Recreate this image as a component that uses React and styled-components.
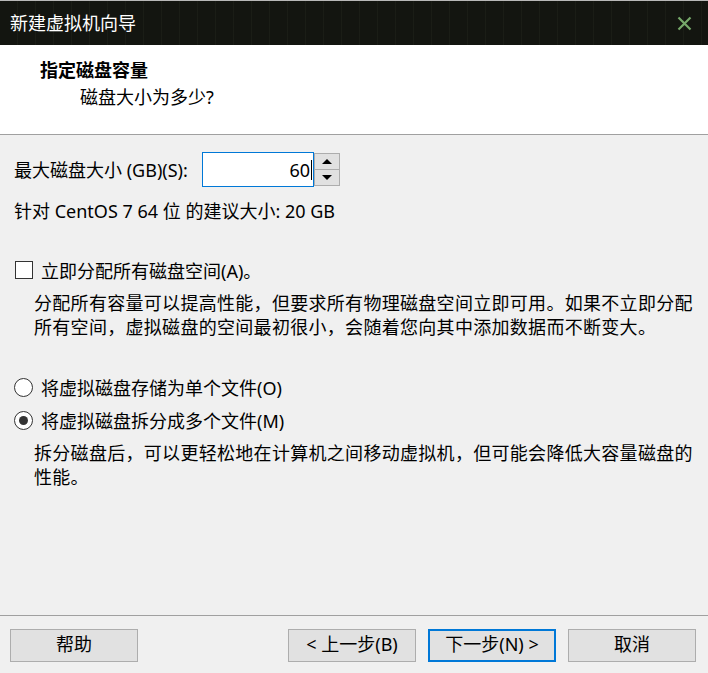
import React, { useState } from "react";
import styled, { createGlobalStyle } from "styled-components";

const GlobalStyle = createGlobalStyle`
  html, body {
    margin: 0;
    padding: 0;
    background: #f0f0f0;
  }
  body {
    font-family: "Noto Sans", "Noto Sans CJK SC", "Liberation Sans", sans-serif;
    font-size: 18px;
    color: #000;
  }
`;

const Window = styled.div`
  width: 708px;
  height: 673px;
  display: flex;
  flex-direction: column;
  background: #f0f0f0;
  overflow: hidden;
`;

const TitleBar = styled.div`
  height: 44px;
  border-top: 1px solid #b8b8b8;
  display: flex;
  align-items: center;
  justify-content: space-between;
  padding: 0 16px 0 10px;
  background-color: #131510;
  background-image: repeating-linear-gradient(
    90deg,
    rgba(255, 255, 255, 0) 0px,
    rgba(255, 255, 255, 0) 17px,
    rgba(120, 130, 100, 0.07) 17px,
    rgba(120, 130, 100, 0.07) 18px
  );
  color: #fff;
`;

const TitleText = styled.span`
  font-size: 18px;
  line-height: 24px;
`;

const CloseIcon = styled.svg`
  width: 15px;
  height: 15px;
  display: block;
`;

const Header = styled.div`
  height: 90px;
  background: #fff;
  border-bottom: 1px solid #a0a0a0;
  display: flex;
  flex-direction: column;
  padding-top: 13px;
  box-sizing: border-box;
`;

const HeaderTitle = styled.div`
  padding-left: 40px;
  font-weight: 700;
  line-height: 24px;
  font-size: 18px;
`;

const HeaderSub = styled.div`
  padding-left: 80px;
  margin-top: 3px;
  line-height: 24px;
`;

const Body = styled.div`
  flex: 1;
  display: flex;
  flex-direction: column;
  padding: 17px 0 0 14px;
`;

const SizeRow = styled.div`
  display: flex;
  align-items: center;
  height: 35px;
`;

const Label = styled.span`
  width: 188px;
  line-height: 24px;
`;

const NumberBox = styled.div`
  display: flex;
  align-items: center;
`;

const Input = styled.div`
  width: 112px;
  height: 35px;
  box-sizing: border-box;
  border: 1px solid #0078d7;
  background: #fff;
  display: flex;
  align-items: center;
  justify-content: flex-end;
  padding-right: 1px;
  line-height: 24px;
`;

const Caret = styled.span`
  display: inline-block;
  width: 1px;
  height: 20px;
  background: #000;
  margin-left: 1px;
`;

const Spin = styled.div`
  width: 26px;
  height: 33px;
  display: flex;
  flex-direction: column;
  border: 1px solid #adadad;
  box-sizing: border-box;
`;

const SpinHalf = styled.div`
  flex: 1;
  background: #e1e1e1;
  display: flex;
  align-items: center;
  justify-content: center;
  border-top: ${(p) => (p.$lower ? "1px solid #adadad" : "none")};
`;

const Triangle = styled.span`
  width: 0;
  height: 0;
  border-left: 5px solid transparent;
  border-right: 5px solid transparent;
  ${(p) =>
    p.$down ? "border-top: 5px solid #000;" : "border-bottom: 5px solid #000;"}
`;

const Hint = styled.div`
  margin-top: 12px;
  line-height: 24px;
`;

const OptionRow = styled.label`
  display: flex;
  align-items: center;
  gap: 8px;
  height: 24px;
  margin-top: ${(p) => p.$gap || 9}px;
  cursor: default;
`;

const Box = styled.span`
  width: 18px;
  height: 18px;
  box-sizing: border-box;
  border: 1px solid #333;
  background: #fff;
  margin-left: 1px;
  flex-shrink: 0;
`;

const Radio = styled.span`
  width: 19px;
  height: 19px;
  box-sizing: border-box;
  border: 1px solid #333;
  border-radius: 50%;
  background: #fff;
  display: flex;
  align-items: center;
  justify-content: center;
  flex-shrink: 0;
  &::after {
    content: "";
    width: 9px;
    height: 9px;
    border-radius: 50%;
    background: ${(p) => (p.$checked ? "#333" : "transparent")};
  }
`;

const Note = styled.div`
  margin-top: 9px;
  padding-left: 20px;
  line-height: 24px;
  white-space: nowrap;
  letter-spacing: 0.3px;
`;

const Footer = styled.div`
  border-top: 1px solid #a0a0a0;
  height: 58px;
  display: flex;
  align-items: flex-start;
  padding: 13px 12px 0 10px;
  box-sizing: border-box;
  gap: 12px;
`;

const Button = styled.button`
  width: 128px;
  height: 33px;
  box-sizing: border-box;
  border: ${(p) => (p.$primary ? "2px solid #0078d7" : "1px solid #adadad")};
  background: #e1e1e1;
  font-family: inherit;
  font-size: 18px;
  line-height: 24px;
  color: #000;
  padding: 0 0 3px;
  display: flex;
  align-items: center;
  justify-content: center;
  margin-left: ${(p) => p.$push || 0}px;
`;

export default function App() {
  const [mode, setMode] = useState("split");
  return (
    <>
      <GlobalStyle />
      <Window>
        <TitleBar>
          <TitleText>新建虚拟机向导</TitleText>
          <CloseIcon viewBox="0 0 15 15">
            <path d="M1.5 1.5 L13.5 13.5 M13.5 1.5 L1.5 13.5" stroke="#76a86a" strokeWidth="2.2" />
          </CloseIcon>
        </TitleBar>
        <Header>
          <HeaderTitle>指定磁盘容量</HeaderTitle>
          <HeaderSub>磁盘大小为多少?</HeaderSub>
        </Header>
        <Body>
          <SizeRow>
            <Label>最大磁盘大小 (GB)(S):</Label>
            <NumberBox>
              <Input>
                60
                <Caret />
              </Input>
              <Spin>
                <SpinHalf>
                  <Triangle />
                </SpinHalf>
                <SpinHalf $lower>
                  <Triangle $down />
                </SpinHalf>
              </Spin>
            </NumberBox>
          </SizeRow>
          <Hint>针对 CentOS 7 64 位 的建议大小: 20 GB</Hint>

          <OptionRow $gap={35}>
            <Box />
            <span>立即分配所有磁盘空间(A)。</span>
          </OptionRow>
          <Note>
            分配所有容量可以提高性能，但要求所有物理磁盘空间立即可用。如果不立即分配
            <br />
            所有空间，虚拟磁盘的空间最初很小，会随着您向其中添加数据而不断变大。
          </Note>

          <OptionRow $gap={36} onClick={() => setMode("single")}>
            <Radio $checked={mode === "single"} />
            <span>将虚拟磁盘存储为单个文件(O)</span>
          </OptionRow>
          <OptionRow onClick={() => setMode("split")}>
            <Radio $checked={mode === "split"} />
            <span>将虚拟磁盘拆分成多个文件(M)</span>
          </OptionRow>
          <Note>
            拆分磁盘后，可以更轻松地在计算机之间移动虚拟机，但可能会降低大容量磁盘的
            <br />
            性能。
          </Note>
        </Body>
        <Footer>
          <Button>帮助</Button>
          <Button $push={138}>&lt; 上一步(B)</Button>
          <Button $primary>下一步(N) &gt;</Button>
          <Button>取消</Button>
        </Footer>
      </Window>
    </>
  );
}
